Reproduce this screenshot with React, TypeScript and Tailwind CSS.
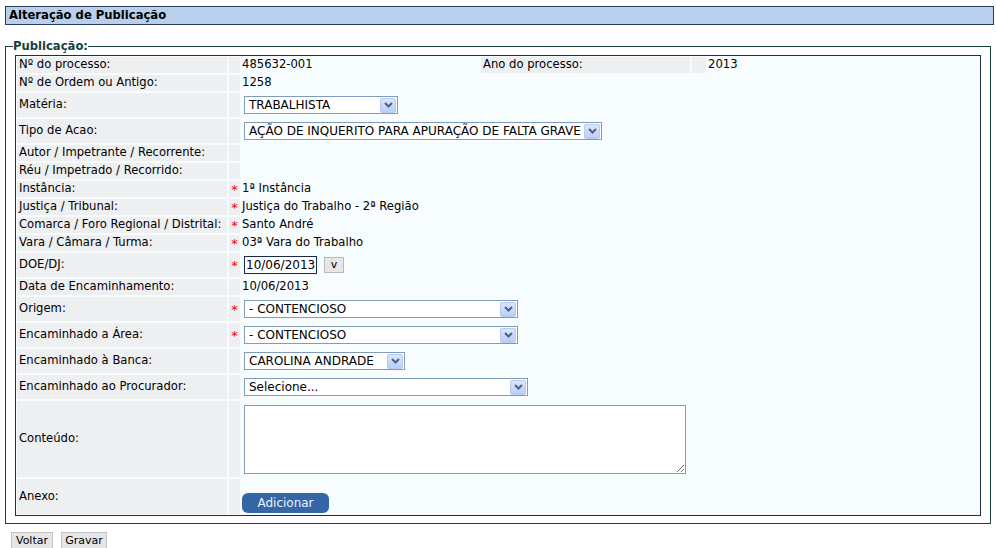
import React from "react";

const font = { fontFamily: '"DejaVu Sans", Verdana, sans-serif' };

function Arrow() {
  return (
    <span className="flex h-[15px] w-[16px] items-center justify-center rounded-[2px] border border-[#b7c9ef] bg-gradient-to-b from-[#dbe6fd] to-[#b9cdf7]">
      <svg width="9" height="6" viewBox="0 0 9 6">
        <path d="M1 1 L4.5 4.5 L8 1" fill="none" stroke="#4d6185" strokeWidth="2" />
      </svg>
    </span>
  );
}

function Select({ value, width }: { value: string; width: string }) {
  return (
    <div className={`ml-[2px] flex h-[18px] items-center border border-[#7f9db9] bg-white pl-[4px] pr-[1px] text-[12px] ${width}`}>
      <span className="flex-1 whitespace-nowrap leading-none">{value}</span>
      <Arrow />
    </div>
  );
}

function Row({
  label,
  star,
  h,
  children,
}: {
  label: string;
  star?: boolean;
  h: string;
  children?: React.ReactNode;
}) {
  return (
    <div className={`flex gap-[2px] ${h}`}>
      <div className="flex w-[210px] items-center whitespace-nowrap bg-[#eeeff1] pl-[2px]">{label}</div>
      <div className="flex w-[11px] items-center justify-center bg-[#eeeff1] pt-[1px] text-[13px] text-[#e00]">
        {star ? "*" : ""}
      </div>
      <div className="flex flex-1 items-center">{children}</div>
    </div>
  );
}

export default function App() {
  return (
    <div className="w-[996px] h-[548px] overflow-hidden bg-white pl-[5px] pt-[6px] text-[11.6px] text-black" style={font}>
      <div className="flex h-[19px] w-[989px] items-center border border-[#2b3b5b] bg-[#b9d0ec] pl-[3px] font-bold">
        Alteração de Publicação
      </div>

      <fieldset className="mt-[14px] w-[986px] border border-[#17403e] px-[9px] pb-[7px] pt-[2px]">
        <legend className="-ml-[2px] font-bold leading-[14px] text-[#173f3f]">Publicação:</legend>
        <div className="flex flex-col gap-[2px] border border-[#1e2d4d] bg-[#f7fdfe] p-[1px]">
          <div className="flex h-[16px] gap-[2px]">
            <div className="flex w-[210px] items-center bg-[#eeeff1] pl-[2px]">Nº do processo:</div>
            <div className="w-[11px] bg-[#eeeff1]" />
            <div className="flex w-[237px] items-center">485632-001</div>
            <div className="flex w-[209px] items-center bg-[#eeeff1] pl-[2px]">Ano do processo:</div>
            <div className="w-[14px] bg-[#eeeff1]" />
            <div className="flex flex-1 items-center">2013</div>
          </div>
          <Row label="Nº de Ordem ou Antigo:" h="h-[16px]">1258</Row>
          <Row label="Matéria:" h="h-[24px]">
            <Select value="TRABALHISTA" width="w-[154px]" />
          </Row>
          <Row label="Tipo de Acao:" h="h-[24px]">
            <Select value="AÇÃO DE INQUERITO PARA APURAÇÃO DE FALTA GRAVE" width="w-[358px]" />
          </Row>
          <Row label="Autor / Impetrante / Recorrente:" h="h-[16px]" />
          <Row label="Réu / Impetrado / Recorrido:" h="h-[16px]" />
          <Row label="Instância:" star h="h-[16px]">1ª Instância</Row>
          <Row label="Justiça / Tribunal:" star h="h-[16px]">Justiça do Trabalho - 2ª Região</Row>
          <Row label="Comarca / Foro Regional / Distrital:" star h="h-[16px]">Santo André</Row>
          <Row label="Vara / Câmara / Turma:" star h="h-[16px]">03ª Vara do Trabalho</Row>
          <Row label="DOE/DJ:" star h="h-[24px]">
            <div className="ml-[2px] flex h-[18px] w-[73px] items-center border border-[#1b2a48] bg-white pl-[1px] text-[12px]">
              10/06/2013
            </div>
            <div className="ml-[7px] flex h-[16px] w-[20px] items-center justify-center border border-[#b9b9b9] bg-[#e7e7e7] text-[11px]">
              v
            </div>
          </Row>
          <Row label="Data de Encaminhamento:" h="h-[16px]">10/06/2013</Row>
          <Row label="Origem:" star h="h-[24px]">
            <Select value="- CONTENCIOSO" width="w-[274px]" />
          </Row>
          <Row label="Encaminhado a Área:" star h="h-[24px]">
            <Select value="- CONTENCIOSO" width="w-[274px]" />
          </Row>
          <Row label="Encaminhado à Banca:" h="h-[24px]">
            <Select value="CAROLINA ANDRADE" width="w-[161px]" />
          </Row>
          <Row label="Encaminhado ao Procurador:" h="h-[24px]">
            <Select value="Selecione..." width="w-[284px]" />
          </Row>
          <Row label="Conteúdo:" h="h-[76px]">
            <textarea className="ml-[2px] h-[69px] w-[442px] resize border border-[#7f9db9] bg-white" />
          </Row>
          <div className="flex h-[35px] gap-[2px]">
            <div className="flex w-[210px] items-center bg-[#eeeff1] pl-[2px]">Anexo:</div>
            <div className="w-[11px] bg-[#eeeff1]" />
            <div className="flex flex-1 items-end pb-[1px]">
              <button className="flex h-[20px] w-[87px] items-center justify-center rounded-[6px] bg-[#3466a8] text-[12px] text-[#eef3fa]">
                Adicionar
              </button>
            </div>
          </div>
        </div>
      </fieldset>

      <div className="mt-[8px] flex gap-[8px] pl-[6px]">
        <button className="h-[17px] w-[42px] border border-[#c4c4c4] bg-[#e6e6e6] text-[11px]">Voltar</button>
        <button className="h-[17px] w-[46px] border border-[#c4c4c4] bg-[#e6e6e6] text-[11px]">Gravar</button>
      </div>
    </div>
  );
}
